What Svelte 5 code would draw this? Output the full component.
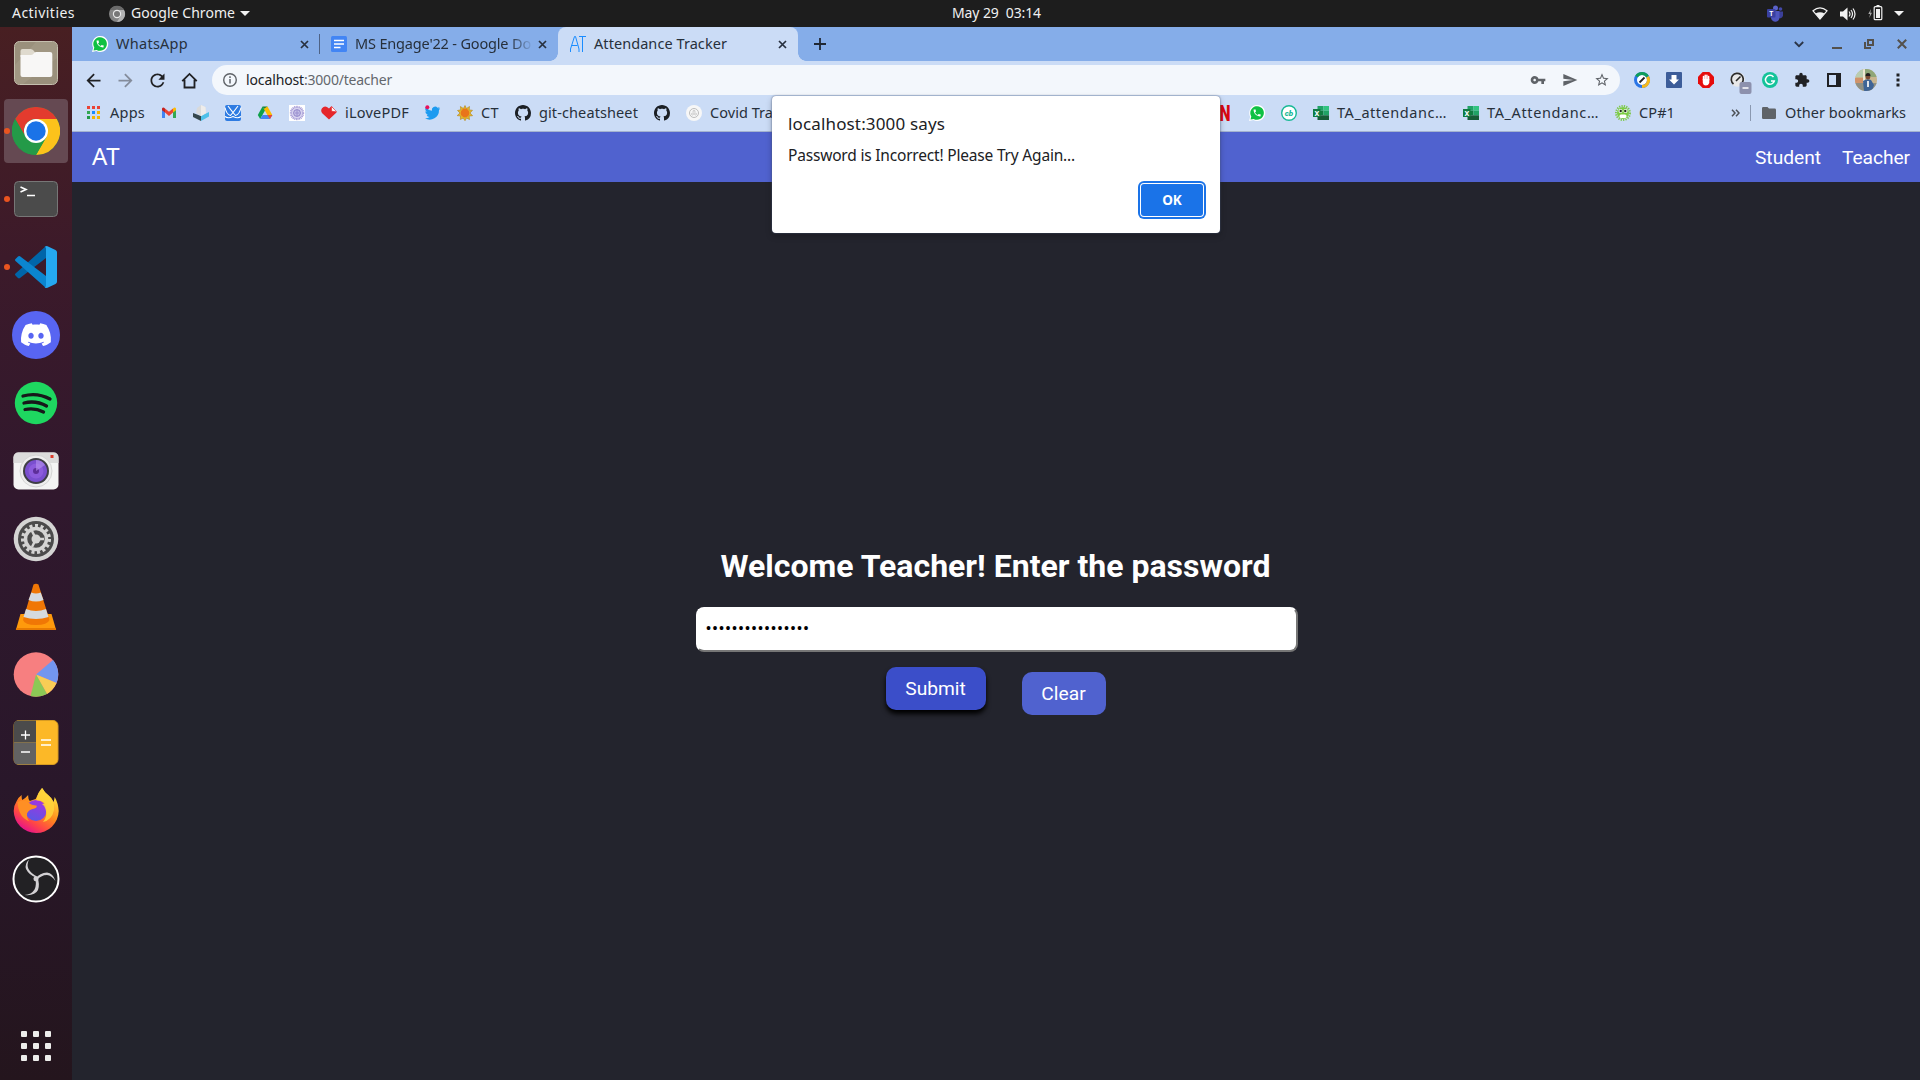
<script>
  // Spreads a label's letters so that it fills the given width.
  function fit(node, width) {
    const natural = node.getBoundingClientRect().width;
    node.style.letterSpacing = `${(width - natural) / node.textContent.length}px`;
  }

  const password = '•'.repeat(16);
</script>

{#snippet whatsapp()}
  <svg class="i16" viewBox="0 0 16 16"><path d="M0 16l1.200-4.200A8 8 0 1 1 4.400 15z" fill="#fff" /><path d="M1.500 14.600l.8-3a6.800 6.800 0 1 1 2.400 2.300z" fill="#0fc143" /><path transform="translate(3.400 3.300) scale(.39)" fill="#fff" d="M6.620 10.790c1.440 2.830 3.760 5.140 6.590 6.590l2.200-2.200c.270-.270.670-.360 1.020-.240 1.120.370 2.330.570 3.570.570.550 0 1 .450 1 1V20c0 .550-.450 1-1 1-9.390 0-17-7.610-17-17 0-.550.450-1 1-1h3.500c.550 0 1 .450 1 1 0 1.250.2 2.450.570 3.570.110.350.030.740-.250 1.020l-2.200 2.200z" /></svg>
{/snippet}
{#snippet closeX()}
  <svg class="x" viewBox="0 0 9 9"><path d="M1 1l7 7M8 1L1 8" stroke="#27303f" stroke-width="1.700" /></svg>
{/snippet}
{#snippet apps()}
  <svg class="i16" viewBox="0 0 16 16"><path d="M1 1h3v3H1z M6 1h3v3H6zM11 1h3v3h-3z" fill="#ea4335" /><path d="M1 6h3v3H1z" fill="#34a853" /><path d="M6 6h3v3H6z" fill="#1a8cff" /><path d="M11 6h3v3h-3zM11 11h3v3h-3zM6 11h3v3H6z" fill="#f5b400" /><path d="M1 11h3v3H1z" fill="#249a48" /></svg>
{/snippet}
{#snippet gmail()}
  <svg class="i16" viewBox="0 0 16 16"><path d="M1 4v9h3V6z" fill="#4285f4" /><path d="M12 6v7h3V4z" fill="#34a853" /><path d="M4 3.500l4 3.200 4-3.200v4L8 11 4 7.500z" fill="#ea4335" /><path d="M1 3.500Q2 1.700 4 3.500v4L1 5.200z" fill="#c5221f" /><path d="M12 3.500Q14 1.700 15 3.500v1.700l-3 2.300z" fill="#fbbc04" /></svg>
{/snippet}
{#snippet cube()}
  <svg class="i16" viewBox="0 0 16 16"><path d="M0 8l8 3v5l-8-4z" fill="#35474d" /><path d="M16 7l-8 4v5l8-4.500z" fill="#4fc0e8" /><path d="M4 3l4-3 4.500 2 .5 6-5 3-5-3z" fill="#d9dadb" /><path d="M8 0l4.500 2L13 8l-5 3z" fill="#eeeceb" /></svg>
{/snippet}
{#snippet wolf()}
  <svg class="i16" viewBox="0 0 16 16"><rect width="16" height="16" rx="2" fill="#2e7be2" /><path d="M0 2.500q1.500 7 5.500 8L8 7.500l2.500 3q4-1 5.500-8M3 1l5 6.500L13 1M0 11.500q3 2.500 8 0 5 2.500 8 0" fill="none" stroke="#fff" stroke-width="1.100" /></svg>
{/snippet}
{#snippet drive()}
  <svg class="i16" viewBox="0 0 16 16"><path d="M5.500 1.500L.8 10l2.400 4L8 5.500z" fill="#0fa04b" /><path d="M5.500 1.500h5L8 5.700z" fill="#188038" /><path d="M10.500 1.500L15.300 10h-4.900L6.800 3.800z" fill="#fbbc04" /><path d="M5.500 10h9.800L13 14H3.200z" fill="#4285f4" /><path d="M10.400 10h4.900L13 14z" fill="#ea4335" /></svg>
{/snippet}
{#snippet seal()}
  <svg class="i16" viewBox="0 0 16 16"><path d="M0 0h16v16H0z" fill="#fff" /><circle cx="8" cy="8" r="6.200" fill="#d7d3ef" stroke="#a79cd6" stroke-width="2" stroke-dasharray="1 .6" /><circle cx="8" cy="8" r="3.400" fill="#c5bfe7" stroke="#9287ca" /><path d="M8 5v6M6 8h4" stroke="#9a90cf" /></svg>
{/snippet}
{#snippet heart()}
  <svg class="i16" viewBox="0 0 16 16"><path d="M8 14.500L1.200 8.200Q-.7 5.500 1 3.200 4-.2 8 3.500q1.500-2 3-2l4.500 6z" fill="#e5262b" /><path d="M10.400 1.400l5.300 5.400-5-.5z" fill="#fff" stroke="#e5262b" stroke-width=".6" /></svg>
{/snippet}
{#snippet twitter()}
  <svg class="i16" viewBox="0 0 24 24"><path fill="#1d9bf0" d="M22.600 4.900a9.800 9.800 0 0 1-2.800.8 4.900 4.900 0 0 0 2.100-2.700c-1 .6-2 1-3.100 1.200a4.900 4.900 0 0 0-8.400 4.500A14 14 0 0 1 1.300 3.500a4.900 4.900 0 0 0 1.500 6.600c-.8 0-1.500-.2-2.200-.6a4.900 4.900 0 0 0 3.900 4.900c-.7.200-1.500.2-2.200.1a4.900 4.900 0 0 0 4.600 3.400A9.900 9.900 0 0 1 0 20a14 14 0 0 0 21-12.500c.8-.7 1.200-1.500 1.600-2.600z" /><circle cx="3.500" cy="3.500" r="3" fill="#e8115b" /></svg>
{/snippet}
{#snippet sun()}
  <svg class="i16" viewBox="0 0 16 16"><path d="M8 .5l1.500 3 3-2-.3 3.400 3.300.4L13 8l2.600 2.700-3.500.3.400 3.500-3-1.500L8 15.700 6.300 13l-3 1.500.300-3.500-3.400-.4L3 8 .500 5.500l3.300-.7-.4-3.300 3 2z" fill="#e3b82a" stroke="#b0821c" stroke-width=".6" /><circle cx="8" cy="8" r="4.400" fill="#e9751a" /></svg>
{/snippet}
{#snippet github()}
  <svg class="i16" viewBox="0 0 16 16"><path fill="#1b1f24" d="M8 0C3.580 0 0 3.580 0 8c0 3.540 2.290 6.530 5.470 7.590.4.070.550-.170.550-.380 0-.190-.010-.820-.010-1.490-2.010.370-2.530-.490-2.690-.940-.090-.230-.480-.940-.820-1.130-.280-.150-.680-.520-.010-.530.630-.010 1.080.580 1.230.820.720 1.210 1.870.870 2.330.660.070-.520.280-.870.510-1.070-1.780-.2-3.640-.890-3.640-3.950 0-.870.310-1.590.820-2.150-.080-.2-.360-1.020.080-2.120 0 0 .670-.210 2.200.820.640-.180 1.320-.270 2-.270.680 0 1.360.090 2 .270 1.530-1.040 2.200-.820 2.200-.820.440 1.100.160 1.920.080 2.120.510.560.820 1.270.820 2.150 0 3.070-1.870 3.750-3.650 3.950.290.250.540.730.540 1.480 0 1.070-.010 1.930-.010 2.200 0 .210.150.460.550.380A8.013 8.013 0 0016 8c0-4.420-3.580-8-8-8z" /></svg>
{/snippet}
{#snippet covid()}
  <svg class="i16" viewBox="0 0 16 16"><circle cx="8" cy="8" r="8" fill="#f7f7f7" /><circle cx="8" cy="8" r="4.500" fill="none" stroke="#bdbdbd" /><circle cx="6.500" cy="9" r="1" fill="none" stroke="#bbb" stroke-width=".7" /><circle cx="9.500" cy="9" r="1" fill="none" stroke="#bbb" stroke-width=".7" /><circle cx="8" cy="6.300" r="1" fill="none" stroke="#bbb" stroke-width=".7" /></svg>
{/snippet}
{#snippet netflix()}
  <svg class="i16" viewBox="0 0 16 16"><text x="8" y="16" text-anchor="middle" font-family="Roboto, sans-serif" font-weight="900" font-size="22" textLength="11" lengthAdjust="spacingAndGlyphs" fill="#d9070f">N</text></svg>
{/snippet}
{#snippet cb()}
  <svg class="i16" viewBox="0 0 16 16"><circle cx="8" cy="8" r="7.300" fill="#fff" stroke="#19b996" stroke-width="1.400" /><text x="8" y="10.800" text-anchor="middle" font-family="Roboto, sans-serif" font-weight="900" font-style="italic" font-size="8" fill="#19b996">cb</text></svg>
{/snippet}
{#snippet excel()}
  <svg class="i16" viewBox="0 0 16 16"><path d="M4.500 1h6v4.700h-6z" fill="#21a366" /><path d="M10.500 1H16v4.700h-5.500z" fill="#33c481" /><path d="M4.500 5.700h6v4.600h-6z" fill="#107c41" /><path d="M10.500 5.700H16v4.600h-5.500z" fill="#21a366" /><path d="M4.500 10.300H16V15H4.500z" fill="#185c37" /><path d="M0 4h7.500v8H0z" fill="#107c41" /><text x="3.800" y="10.700" text-anchor="middle" font-family="Roboto, sans-serif" font-weight="700" font-size="7.500" fill="#fff">X</text></svg>
{/snippet}
{#snippet germ()}
  <svg class="i16" viewBox="0 0 16 16"><circle cx="8" cy="8" r="7" fill="none" stroke="#7ec84c" stroke-width="2" stroke-dasharray="1.300 1.100" /><circle cx="8" cy="8" r="6" fill="#7ccc45" /><circle cx="5.500" cy="6" r="2" fill="#fff" /><circle cx="10.500" cy="6" r="2" fill="#fff" /><circle cx="5.700" cy="6" r="1.200" fill="#20301a" /><circle cx="10.300" cy="6" r="1.200" fill="#20301a" /><rect x="4.500" y="9.500" width="7" height="3.500" rx="1.500" fill="#fff" /></svg>
{/snippet}
{#snippet bookmark(icon, label, width)}
  <span class="bm">{@render icon()}{#if label}<span class="lbl" use:fit={width}>{label}</span>{/if}</span>
{/snippet}

<div class="screen">
  <header class="topbar">
    <span class="activities" use:fit={63}>Activities</span>
    <svg class="i16 chromegrey" viewBox="0 0 16 16"><circle cx="8" cy="8" r="8" fill="#848484" /><path d="M8 4h7A8 8 0 0 1 8 16l3.500-6z" fill="#b2b2b2" /><path d="M1 4a8 8 0 0 1 14 0H8z" fill="#6b6b6b" /><circle cx="8" cy="8" r="4.200" fill="#e9e9e9" /><circle cx="8" cy="8" r="3" fill="#777" /></svg>
    <span class="appname" use:fit={104}>Google Chrome</span>
    <svg class="tri" viewBox="0 0 10 5"><path d="M0 0h10L5 5z" fill="#f2f2f2" /></svg>
    <span class="clock" use:fit={89}>May 29&nbsp; 03:14</span>
    <div class="tray">
      <svg class="i16 teams" viewBox="0 0 16 16"><circle cx="13.500" cy="4" r="1.800" fill="#4448a8" /><path d="M10 6.500h6v4a3 3 0 0 1-5 2z" fill="#3b3f99" /><circle cx="8.500" cy="3" r="2.500" fill="#5b62c9" /><path d="M4 6h8.500v6a4 4 0 0 1-8.500 1z" fill="#4e55bd" /><rect y="4" width="8.500" height="8.500" rx="1" fill="#3940a0" /><text x="4.200" y="10.700" text-anchor="middle" font-family="Roboto, sans-serif" font-size="6.500" font-weight="700" fill="#fff">T</text></svg>
      <svg class="wifi" width="16" height="13" viewBox="0 0 16 13"><path d="M1 3.800Q8-2 15 3.800L8 12z" fill="none" stroke="#f2f2f2" stroke-width="1.200" /><path d="M3.500 6.500Q8 4 12.500 6.500L8 12z" fill="#f2f2f2" /></svg>
      <svg class="vol" width="16" height="14" viewBox="0 0 16 14"><path d="M0 4.500h3L7.500.500v13L3 9.500H0z" fill="#f2f2f2" /><path d="M9 4.500q2 2.500 0 5M11 3q3 4 0 8M13 1.500q4 5.500 0 11" fill="none" stroke="#f2f2f2" stroke-width="1.200" /></svg>
      <svg class="batt" width="15" height="16" viewBox="0 0 15 16"><path d="M3 4L.3 9h1.800L1.200 13 4 7.700H2.300z" fill="#aaa" /><path d="M8.500 0h3v1.500h-3z" fill="#f2f2f2" /><rect x="6.200" y="1.700" width="7.600" height="13" rx="1" fill="none" stroke="#f2f2f2" stroke-width="1.200" /><path d="M8 4h4v9H8z" fill="#f2f2f2" /></svg>
      <svg class="tri" viewBox="0 0 10 5"><path d="M0 0h10L5 5z" fill="#f2f2f2" /></svg>
    </div>
  </header>

  <div class="desktop">
    <nav class="dock">
      <div class="app"><svg width="44" height="44" viewBox="0 0 44 44"><rect x=".5" y=".5" width="43" height="43" rx="5" fill="#9a907c" stroke="#c5bfae" /><path d="M22 1h17q4 0 4 4v12L9 43H5q-4 0-4-4V24z" fill="#a69d89" opacity=".6" /><path d="M6.500 10q0-2 2-2h8q2 0 3 1.500l2 2.500v4h-15z" fill="#dfdace" /><path d="M6.500 14h10q2 0 3.200-1.500Q20.500 11 22 11h14q2.300 0 2.300 2v21q0 2-2.300 2H8.500q-2 0-2-2z" fill="#f8f7f6" /></svg></div>
      <div class="app run active"><svg width="48" height="48" viewBox="0 0 48 48"><circle cx="24" cy="24" r="24" fill="#249a48" /><path d="M24 12h20.800A24 24 0 0 1 24 48L34.400 30z" fill="#fcc21b" /><path d="M3.200 12a24 24 0 0 1 41.600 0H24a12 12 0 0 0-10.400 18z" fill="#e33b2e" /><path d="M13.600 30L3.200 12A24 24 0 0 0 24 48l10.400-18A12 12 0 0 1 13.600 30z" fill="#249a48" /><circle cx="24" cy="24" r="12" fill="#fff" /><circle cx="24" cy="24" r="9.700" fill="#1a73e8" /></svg></div>
      <div class="app run"><svg width="44" height="36" viewBox="0 0 44 36"><rect x=".5" y=".5" width="43" height="35" rx="4" fill="#4b4b4b" stroke="#777" /><path d="M6.500 6l5.500 2.500L6.500 11M13 14.500h8" fill="none" stroke="#fff" stroke-width="1.600" /></svg></div>
      <div class="app run"><svg width="42" height="42" viewBox="0 0 42 42"><path d="M31 0v12L5 32q-1 .8-2 0L.5 29.500q-1-1 0-2z" fill="#0065a9" /><path d="M.5 15q-1-1 0-2L3 10.500q1-1 2-.2L31 30v12z" fill="#0b85cf" /><path d="M31 .3q.7-.5 1.500-.1L40.500 4q1.500.7 1.500 2.200v29.600q0 1.500-1.500 2.200L32.500 41.800q-1.800.5-3-.8 1.500.5 1.500-1.500V2.500q0-2-1.500-1.500z" fill="#25a8f0" /></svg></div>
      <div class="app"><svg width="48" height="48" viewBox="0 0 48 48"><circle cx="24" cy="24" r="24" fill="#5865f2" /><path transform="translate(9 8.600) scale(1.250)" fill="#fff" d="M20.317 4.370a19.790 19.790 0 00-4.885-1.515c-.3.400-.5.900-.687 1.286-1.845-.276-3.680-.276-5.487 0-.164-.393-.406-.874-.696-1.286a19.736 19.736 0 00-4.885 1.515C.533 9.046-.319 13.580.099 18.058c2.053 1.564 4.072 2.479 6.108 3.085.462-.658.873-1.322 1.226-2.100-.694-.247-1.315-.549-1.922-1.020l.372-.291c3.928 1.783 8.180 1.783 12.139-.001l.373.292c-.5.471-1.200.772-1.880 1.019.4.805.772 1.470 1.225 2.100 2.045-.606 4.034-1.521 6.118-3.085.5-5.177-.838-9.674-3.541-13.687zM8.020 15.331c-1.183 0-2.157-1.086-2.157-2.419s.956-2.419 2.157-2.419c1.211 0 2.176 1.095 2.157 2.419 0 1.333-.956 2.419-2.157 2.419zm7.975 0c-1.183 0-2.157-1.086-2.157-2.419s.955-2.419 2.157-2.419c1.211 0 2.176 1.095 2.157 2.419 0 1.333-.946 2.419-2.157 2.419z" /></svg></div>
      <div class="app"><svg width="44" height="44" viewBox="0 0 44 44"><circle cx="22" cy="22" r="21.200" fill="#1ed760" /><path d="M9 15q14-4 27 3M10 22q12-3 22.500 3M11 28.500q10-2 18.500 2.500" fill="none" stroke="#17181a" stroke-width="3.300" stroke-linecap="round" /></svg></div>
      <div class="app"><svg width="46" height="38" viewBox="0 0 46 38"><rect x=".5" y=".5" width="45" height="37" rx="5" fill="#f4f4f4" /><path d="M.5 11V6q0-5.500 5-5.500h35q5 0 5 5.500v5z" fill="#dcdcdc" /><path d="M37.500 3h3v3h-3z" fill="#dc3b2c" /><circle cx="23" cy="19" r="16" fill="#eee" stroke="#d5d5d5" /><circle cx="23" cy="19" r="13" fill="#3f3f46" /><circle cx="23" cy="19" r="11" fill="#7a4fcf" /><circle cx="23" cy="19" r="7.500" fill="#8c5bdc" /><circle cx="23" cy="19" r="3" fill="#5d2e99" /><path d="M23 19V8a11 11 0 0 1 9 5z" fill="#b895ee" opacity=".6" /></svg></div>
      <div class="app"><svg width="46" height="46" viewBox="0 0 46 46"><circle cx="23" cy="23" r="22.300" fill="#d4d4d3" /><circle cx="23" cy="23" r="18" fill="#4b4b4b" /><circle cx="23" cy="23" r="13.300" fill="none" stroke="#d4d4d3" stroke-width="3.500" stroke-dasharray="3 2.570" /><circle cx="23" cy="23" r="10.500" fill="none" stroke="#d4d4d3" stroke-width="3.500" /><path d="M23 23l8 0M23 23l-4-8M23 23l-4 8" stroke="#d4d4d3" stroke-width="2.500" /><circle cx="23" cy="23" r="4.500" fill="#d4d4d3" /></svg></div>
      <div class="app"><svg width="42" height="48" viewBox="0 0 42 48"><path d="M5.500 31h31L41 46.500H1z" fill="#ff9a0c" /><path d="M1.300 45h39.400l.5 2H.8z" fill="#e77a02" /><path d="M18.500 1.500q2.500-1.500 5 0L34.500 37q-2 5-13.500 5T8 37z" fill="#f07705" /><path d="M16.300 9.500q4.700 2 9.400 0L28.500 17q-7.500 3-15 0z" fill="#d5dade" /><path d="M11 26q10 4 20 0l2.500 8q-12.500 4-25 0z" fill="#d5dade" /></svg></div>
      <div class="app"><svg width="46" height="46" viewBox="0 0 46 46"><circle cx="23" cy="22.500" r="22.300" fill="#f77f80" /><path d="M23 22.500L40 8a22.300 22.300 0 0 1 3.500 23z" fill="#7396f0" /><path d="M23 22.500L43.500 31q-3 7-9.500 11z" fill="#f9cd55" /><path d="M23 22.500L34 42q-8 4-16.500 2z" fill="#8cc955" /></svg></div>
      <div class="app"><svg width="46" height="46" viewBox="0 0 46 46"><rect x="1" y=".5" width="44" height="44" rx="5" fill="#fcb827" stroke="#d79b22" /><path d="M23 .5v22H.7V5.500q0-5 5-5z" fill="#4b4b4b" /><path d="M23 22.500v22H5.700q-5 0-5-5V22.500z" fill="#626262" /><path d="M8 15h9M12.500 10.500v9M8 32h9M28 20h10M28 25h10" stroke="#fff" stroke-width="1.300" /></svg></div>
      <div class="app"><svg class="firefox" width="46" height="46" viewBox="0 0 46 46">
        <defs>
          <linearGradient id="fox" x1=".8" y1=".1" x2=".25" y2=".95"><stop offset="0" stop-color="#ffe23f" /><stop offset=".45" stop-color="#ff8a1c" /><stop offset=".75" stop-color="#ff4646" /><stop offset="1" stop-color="#e5128c" /></linearGradient>
          <linearGradient id="globe" x1=".7" y1="0" x2=".3" y2="1"><stop offset="0" stop-color="#a334e0" /><stop offset="1" stop-color="#5b57e4" /></linearGradient>
        </defs>
        <path d="M.7 24q.3-6 3-10 2-4 5-6-.3 3 .5 5 3-1.500 5-4l1-1q-.3 4 1.500 6l6-2q2-6 6.500-11 2 4 6 7 4 3 5.500 7l1-5q3.500 6 4 14A22.500 22.500 0 0 1 23 46 22.500 22.500 0 0 1 .7 24z" fill="url(#fox)" />
        <circle cx="23" cy="23.500" r="10.500" fill="url(#globe)" />
        <path d="M4.500 15q6.500-3 11 .5 3 3 8 3 1 2-2 3-6 1-7.500 5-.5 5 2.500 8-11-4-12-19.500z" fill="#ff8f24" /><path d="M29 1q3 5 7 8 6 6 5 14-2 10-11 12 5-6 2.500-13-.5-3-3.500-5l3-.5q-3-3.500-8.500-3 1-8 5.500-12.500z" fill="#ffd53b" opacity=".85" /></svg></div>
      <div class="app"><svg width="48" height="48" viewBox="0 0 48 48"><circle cx="24" cy="24" r="22.500" fill="#222124" stroke="#fff" stroke-width="2" /><g fill="#d3d1d4"><path d="M24 22.500Q17 20 14 14q-1.500-5 3-9.500-2.500 5.500-.5 9.500 3 5 8.500 7.500z" /><path d="M23 24q5-6.500 12-6.500 6 .5 8.500 8.500-4-5.500-8.500-6-6 0-10.500 5.500z" /><path d="M25.500 23q2.500 6 .5 12-3 6-13.500 5 7-.5 10-5.500 2.500-5 .5-10.500z" /></g><circle cx="24" cy="23.800" r="2.500" fill="#d3d1d4" /></svg></div>
      <div class="grid">{#each Array(9) as _}<i></i>{/each}</div>
    </nav>

    <main class="window">
      <div class="tabs">
        <div class="tab first">{@render whatsapp()}<span class="title" use:fit={72}>WhatsApp</span>{@render closeX()}</div>
        <div class="tab second">
          <svg class="i16" viewBox="0 0 16 16"><rect width="16" height="16" rx="1.500" fill="#4285f4" /><path d="M3 4.500h10M3 8h10M3 11.500h6.500" stroke="#fff" stroke-width="1.700" /></svg>
          <span class="title faded"><span class="lbl" use:fit={176}>MS Engage'22 - Google Do</span></span>{@render closeX()}
        </div>
        <div class="tab current">
          <svg class="i16" viewBox="0 0 16 16"><path d="M.5 16V13l4-12.500h1L9 13v3M1.500 9.500h6M9 .5h7M12.500.5V16" fill="none" stroke="#1a8cff" /></svg>
          <span class="title" use:fit={133}>Attendance Tracker</span>{@render closeX()}
        </div>
        <svg class="plus" viewBox="0 0 12 12"><path d="M6 0v12M0 6h12" stroke="#202733" stroke-width="1.800" /></svg>
        <div class="controls">
          <svg width="10" height="7" viewBox="0 0 10 7"><path d="M.8 1L5 5.200 9.200 1" fill="none" stroke="#2b3547" stroke-width="1.800" /></svg>
          <svg class="min" width="10" height="10" viewBox="0 0 10 10"><path d="M0 9h10" stroke="#53504c" stroke-width="2" /></svg>
          <svg class="restore" width="10" height="10" viewBox="0 0 10 10"><path d="M4 1h5v5H4zM1 3v6h6" fill="none" stroke="#53504c" stroke-width="2" /></svg>
          <svg class="close" width="10" height="10" viewBox="0 0 10 10"><path d="M.8.8l8.400 8.400M9.200.8L.8 9.200" stroke="#53504c" stroke-width="2" /></svg>
        </div>
      </div>

      <div class="toolbar">
        <div class="navicons">
          <svg viewBox="0 0 24 24"><path d="M20 11H7.830l5.590-5.590L12 4l-8 8 8 8 1.410-1.410L7.830 13H20v-2z" fill="#202124" /></svg>
          <svg viewBox="0 0 24 24"><path d="M4 11h12.170l-5.590-5.590L12 4l8 8-8 8-1.410-1.410L16.170 13H4v-2z" fill="#848c9b" /></svg>
          <svg viewBox="0 0 24 24"><path d="M17.650 6.350C16.200 4.900 14.210 4 12 4c-4.420 0-7.990 3.580-7.990 8s3.570 8 7.990 8c3.730 0 6.840-2.550 7.730-6h-2.080c-.820 2.330-3.040 4-5.650 4-3.310 0-6-2.690-6-6s2.690-6 6-6c1.660 0 3.140.690 4.220 1.780L13 11h7V4l-2.350 2.350z" fill="#202124" /></svg>
          <svg viewBox="0 0 24 24"><path d="M3.700 12.800L12 4.500l8.300 8.300M6.300 11v9h11.400v-9" fill="none" stroke="#202124" stroke-width="2.100" /></svg>
        </div>
        <div class="omnibox">
          <svg class="i16" viewBox="0 0 16 16"><circle cx="8" cy="8" r="6.300" fill="none" stroke="#5f6368" stroke-width="1.400" /><path d="M8 7v4.500M8 4.300V6" stroke="#5f6368" stroke-width="1.500" /></svg>
          <span class="url"><b use:fit={58}>localhost</b><span use:fit={88}>:3000/teacher</span></span>
          <div class="omniright">
            <svg width="16" height="16" viewBox="0 0 24 24"><path fill="#5f6368" d="M12.650 10C11.830 7.670 9.610 6 7 6c-3.310 0-6 2.690-6 6s2.690 6 6 6c2.610 0 4.830-1.670 5.650-4H17v4h4v-4h2v-4H12.650zM7 14c-1.100 0-2-.9-2-2s.9-2 2-2 2 .9 2 2-.9 2-2 2z" /></svg>
            <svg width="16" height="16" viewBox="0 0 24 24"><path fill="#5f6368" d="M2.010 21L23 12 2.010 3 2 10l15 2-15 2z" /></svg>
            <svg width="16" height="16" viewBox="0 0 24 24"><path fill="#5f6368" d="M22 9.240l-7.190-.620L12 2 9.190 8.630 2 9.240l5.460 4.730L5.820 21 12 17.270 18.180 21l-1.630-7.030L22 9.240zM12 15.400l-3.760 2.270 1-4.280-3.320-2.880 4.380-.380L12 6.100l1.710 4.040 4.380.380-3.320 2.880 1 4.280L12 15.400z" /></svg>
          </div>
        </div>
        <div class="ext">
          <svg viewBox="0 0 16 16"><circle cx="8" cy="8" r="6.500" fill="#fff" stroke="#2a75e6" stroke-width="3" /><path d="M2.500 4.500A6.500 6.500 0 0 1 13.500 4.500" fill="none" stroke="#0f9d58" stroke-width="3" /><path d="M13.600 4.700A6.500 6.500 0 0 1 8 14.500" fill="none" stroke="#f6b91a" stroke-width="3" /><path d="M5.500 10.500l5-5" stroke="#222" stroke-width="1.800" /></svg>
          <svg viewBox="0 0 16 16"><rect width="16" height="16" rx="1" fill="#3d5d99" /><path d="M5.500 3h5v4.500H13l-5 5-5-5h2.500z" fill="#fff" /></svg>
          <svg viewBox="0 0 16 16"><path d="M4.700 0h6.600L16 4.700v6.600L11.300 16H4.700L0 11.300V4.700z" fill="#e60c0c" /><path d="M5.500 8V4.500M7.200 8V3.200M8.900 8V3.200M10.600 8V4.500" stroke="#fff" stroke-width="1.500" stroke-linecap="round" /><path d="M4.800 7h6.500v4q-1 2.500-3.500 2.500t-3-2.500z" fill="#fff" /></svg>
          <svg viewBox="0 0 16 16"><circle cx="7.500" cy="7.500" r="7.300" fill="#e8e8e8" /><path d="M3.500 12A6 6 0 1 1 12 11" fill="none" stroke="#2b2b2b" stroke-width="1.700" /><path d="M6 9l4.500-4.500" stroke="#2b2b2b" stroke-width="1.600" /><rect x="9.500" y="10" width="12" height="12" rx="2" fill="#8d91ad" /><path d="M12.500 16h6" stroke="#fff" stroke-width="1.500" /></svg>
          <svg viewBox="0 0 16 16"><circle cx="8" cy="8" r="8" fill="#15c39a" /><path d="M11.500 5A4.500 4.500 0 1 0 12.300 9H9" fill="none" stroke="#fff" stroke-width="1.500" /></svg>
          <svg viewBox="0 0 24 24"><path fill="#202124" d="M20.500 11H19V7c0-1.100-.9-2-2-2h-4V3.500C13 2.120 11.880 1 10.500 1S8 2.120 8 3.500V5H4c-1.100 0-1.990.9-1.990 2v3.800H3.500c1.490 0 2.700 1.210 2.700 2.700s-1.210 2.700-2.700 2.700H2V20c0 1.100.9 2 2 2h3.800v-1.500c0-1.490 1.210-2.700 2.700-2.700 1.490 0 2.700 1.210 2.700 2.700V22H17c1.100 0 2-.9 2-2v-4h1.500c1.380 0 2.500-1.120 2.500-2.500S21.880 11 20.500 11z" /></svg>
          <svg viewBox="0 0 16 16"><path d="M2 2h12v12H2z" fill="none" stroke="#202124" stroke-width="2" /><path d="M10 2h4v12h-4z" fill="#202124" /></svg>
          <svg class="avatar" viewBox="0 0 22 22"><path d="M0 0h22v22H0z" fill="#c8b58f" /><path d="M0 0h8v8H0z" fill="#b9cdb0" /><path d="M8 0h2v14H8z" fill="#efe6d2" /><path d="M10 0h12v8H10z" fill="#8fa678" /><path d="M0 9h8v5H0z" fill="#d0936a" /><path d="M0 14h22v8H0z" fill="#8f9084" /><path d="M8 12q4-3 8-1l3 5-2 6H9z" fill="#3f6496" /><path d="M12 12h2v6h-2z" fill="#e0e4ea" /><circle cx="13" cy="8" r="2.400" fill="#7c4c34" /><path d="M10.500 7q0-3 2.500-3t2.500 3z" fill="#221c1e" /></svg>
          <svg viewBox="0 0 16 16"><path d="M6.500 1.500h3v3h-3zM6.500 6.500h3v3h-3zM6.500 11.500h3v3h-3z" fill="#202124" /></svg>
        </div>
      </div>

      <div class="bookmarks">
        <div class="bmgroup">
          {@render bookmark(apps, 'Apps', 35)}
          {@render bookmark(gmail)}
          {@render bookmark(cube)}
          {@render bookmark(wolf)}
          {@render bookmark(drive)}
          {@render bookmark(seal)}
          {@render bookmark(heart, 'iLovePDF', 64)}
          {@render bookmark(twitter)}
          {@render bookmark(sun, 'CT', 18)}
          {@render bookmark(github, 'git-cheatsheet', 99)}
          {@render bookmark(github)}
          {@render bookmark(covid, 'Covid Tracker', 92)}
        </div>
        <div class="bmgroup right">
          {@render bookmark(netflix)}
          {@render bookmark(whatsapp)}
          {@render bookmark(cb)}
          {@render bookmark(excel, 'TA_attendanc…', 110)}
          {@render bookmark(excel, 'TA_Attendanc…', 112)}
          {@render bookmark(germ, 'CP#1', 36)}
        </div>
        <svg class="more" width="9" height="8" viewBox="0 0 9 8"><path d="M1 .8L4 4 1 7.200M5 .8L8 4 5 7.200" fill="none" stroke="#4d5156" stroke-width="1.500" /></svg>
        <span class="rule"></span>
        <svg class="folder" width="14" height="12" viewBox="0 0 14 12"><path d="M0 1.300Q0 0 1.300 0H5.500L7 1.600h5.700q1.300 0 1.300 1.300v7.800q0 1.300-1.300 1.300H1.300Q0 12 0 10.700z" fill="#5f6368" /></svg>
        <span class="lbl" use:fit={121}>Other bookmarks</span>
      </div>

      <div class="page">
        <nav class="sitenav">
          <span class="brand" use:fit={28}>AT</span>
          <span class="link" use:fit={66}>Student</span>
          <span class="link" use:fit={68}>Teacher</span>
        </nav>
        <section class="login">
          <h1 use:fit={550}>Welcome Teacher! Enter the password</h1>
          <div class="field"><span use:fit={104}>{password}</span></div>
          <div class="buttons">
            <button class="submit">Submit</button>
            <button class="clear">Clear</button>
          </div>
        </section>
      </div>

      <div class="dialog">
        <div class="dtitle"><span use:fit={157}>localhost:3000 says</span></div>
        <div class="dtext"><span use:fit={287}>Password is Incorrect! Please Try Again...</span></div>
        <button class="ok">OK</button>
      </div>
    </main>
  </div>
</div>

<style>
  :global(body) { background: #23242d; overflow: hidden; }
  * { box-sizing: border-box; }
  svg { display: block; flex: none; }
  .screen { width: 1920px; height: 1080px; display: flex; flex-direction: column; font-family: "Noto Sans", sans-serif; font-size: 14.5px; overflow: hidden; white-space: nowrap; }
  .i16 { width: 16px; height: 16px; overflow: visible; }
  .lbl { display: inline-block; }

  .topbar { height: 27px; flex: none; background: #1d1d1d; color: #f0f0f0; display: flex; align-items: center; padding-left: 12px; font-size: 14px; }
  .topbar > span { line-height: 20px; padding-bottom: 1px; }
  .chromegrey { margin: 0 6px 0 34px; }
  .tri { width: 10px; height: 5px; }
  .appname + .tri { margin-left: 5px; }
  .clock { margin-left: 702px; }
  .tray { margin-left: auto; margin-right: 16px; display: flex; align-items: center; }
  .teams { margin-top: -1px; }
  .wifi { margin-left: 29px; }
  .vol { margin-left: 12px; }
  .batt { margin-left: 12px; margin-top: -1px; }
  .batt + .tri { margin-left: 11px; }

  .desktop { flex: 1; display: flex; min-height: 0; }
  .dock { width: 72px; flex: none; padding: 2px 0 19px; background: linear-gradient(#481f22 0, #3c1a2a 22%, #30182d 45%, #29172a 72%, #24151d 100%); display: flex; flex-direction: column; }
  .app { height: 68px; display: flex; align-items: center; justify-content: center; position: relative; }
  .app.active { height: 64px; margin: 2px 4px; border-radius: 4px; background: #654952; }
  .run::before { content: ""; position: absolute; left: 4px; width: 6px; height: 6px; border-radius: 50%; background: #e95420; }
  .active::before { left: 0; }
  .firefox { margin-top: -2px; }
  .grid { margin: auto auto 0; display: grid; grid-template-columns: repeat(3, 6px); gap: 6px; }
  .grid i { height: 6px; background: #eeeeec; border-radius: 1px; }

  .window { flex: 1; display: flex; flex-direction: column; position: relative; background: #cbdcf6; color: #27303b; }
  .tabs { height: 34px; flex: none; background: #85ade9; display: flex; align-items: center; }
  .tab { height: 34px; display: flex; align-items: center; }
  .title { margin-left: 8px; line-height: 20px; padding-bottom: 2px; }
  .x { width: 9px; height: 9px; margin-left: auto; }
  .first { width: 248px; padding: 0 11px 0 20px; position: relative; }
  .first::after { content: ""; position: absolute; right: 0; top: 7px; width: 1px; height: 20px; background: #4e6285; }
  .second { width: 238px; padding: 0 11px; }
  .faded { mask-image: linear-gradient(90deg, #000 155px, transparent 178px); }
  .current { width: 240px; padding: 0 11px 0 12px; background: #cbdcf6; border-radius: 8px 8px 0 0; position: relative; }
  .current::before, .current::after { content: ""; position: absolute; bottom: 0; width: 8px; height: 8px; }
  .current::before { left: -8px; background: radial-gradient(circle at 0 0, #85ade9 7.5px, #cbdcf6 8px); }
  .current::after { right: -8px; background: radial-gradient(circle at 100% 0, #85ade9 7.5px, #cbdcf6 8px); }
  .plus { width: 12px; height: 12px; margin-left: 16px; }
  .controls { margin-left: auto; margin-right: 13px; display: flex; align-items: center; }
  .min { margin-left: 28px; }
  .restore { margin-left: 22px; }
  .close { margin-left: 23px; }

  .toolbar { height: 38px; flex: none; display: flex; align-items: center; }
  .navicons { width: 140px; padding-left: 11px; display: flex; gap: 11px; }
  .navicons svg { width: 21px; height: 21px; }
  .omnibox { width: 1408px; height: 30px; border-radius: 15px; background: #f3f7fc; display: flex; align-items: center; padding: 0 10px; }
  .url { margin-left: 8px; line-height: 20px; font-size: 14px; color: #63676d; display: flex; }
  .url b { font-weight: 400; color: #202124; }
  .omniright { margin-left: auto; display: flex; gap: 16px; }
  .ext { margin-left: 14px; display: flex; align-items: center; gap: 16px; }
  .ext svg { width: 16px; height: 16px; overflow: visible; }
  .ext .avatar { width: 22px; height: 22px; margin: 0 -3px; border-radius: 50%; overflow: hidden; }

  .bookmarks { height: 33px; flex: none; display: flex; align-items: center; padding: 0 0 5px 14px; border-bottom: 1px solid #a4b3cf; }
  .bmgroup { display: flex; gap: 16px; }
  .right { margin-left: auto; margin-right: 56px; }
  .bm { display: flex; align-items: center; gap: 8px; line-height: 20px; }
  .bm .lbl { padding-bottom: 2px; }
  .rule { width: 1px; height: 16px; margin: 0 11px 0 10px; background: #8a98b0; }
  .folder { margin-right: 9px; }
  .bookmarks > .lbl { margin-right: 14px; line-height: 20px; padding-bottom: 2px; }

  .page { flex: 1; background: #23242d; font-family: Roboto, sans-serif; color: #fff; }
  .sitenav { height: 50px; background: #5062cf; display: flex; align-items: center; padding: 0 10px 0 20px; }
  .brand { font: 24px/32px "Noto Sans", sans-serif; margin-right: auto; padding-bottom: 2px; }
  .link { font-size: 19.2px; margin-left: 21px; }
  .login { display: flex; flex-direction: column; align-items: center; padding-top: 364px; margin-left: 1px; }
  h1 { margin: 0 2px 0 0; font-size: 32px; line-height: 40px; font-weight: 700; }
  .field { width: 602px; height: 45px; margin-top: 21px; background: #fff; border: 2px solid #767676; border-top-color: #fff; border-left-color: #fff; border-radius: 8px; color: #000; padding: 0 0 2px 8px; display: flex; align-items: center; font-size: 18px; }
  .buttons { display: flex; gap: 36px; margin: 15px 2px 0 0; }
  .buttons button { height: 43px; border: 0; padding: 0; border-radius: 10px; color: #fff; font: 19.2px Roboto, sans-serif; }
  .submit { width: 100px; background: #3b4ec9; box-shadow: 0 4px 5px #000; }
  .buttons .clear { width: 84px; background: #5062cf; margin-top: 5px; }

  .dialog { position: absolute; left: 700px; top: 69px; width: 448px; height: 137px; padding: 17px 16px 0; border-radius: 4px; background: #fff; box-shadow: 0 0 2px #4b5878, 0 3px 6px rgba(0, 0, 0, .25); color: #202124; display: flex; flex-direction: column; }
  .dtitle { font-size: 17px; line-height: 22px; }
  .dtext { font-size: 15.5px; line-height: 20px; margin-top: 10px; }
  .ok { align-self: flex-end; margin: 19px 1px 0 0; width: 62px; height: 32px; border: 0; border-radius: 3px; background: #1a73e8; box-shadow: 0 0 0 1px #fff, 0 0 0 3px #1a73e8; color: #fff; font: 700 13.5px "Noto Sans", sans-serif; padding: 0 0 1px; }
</style>
